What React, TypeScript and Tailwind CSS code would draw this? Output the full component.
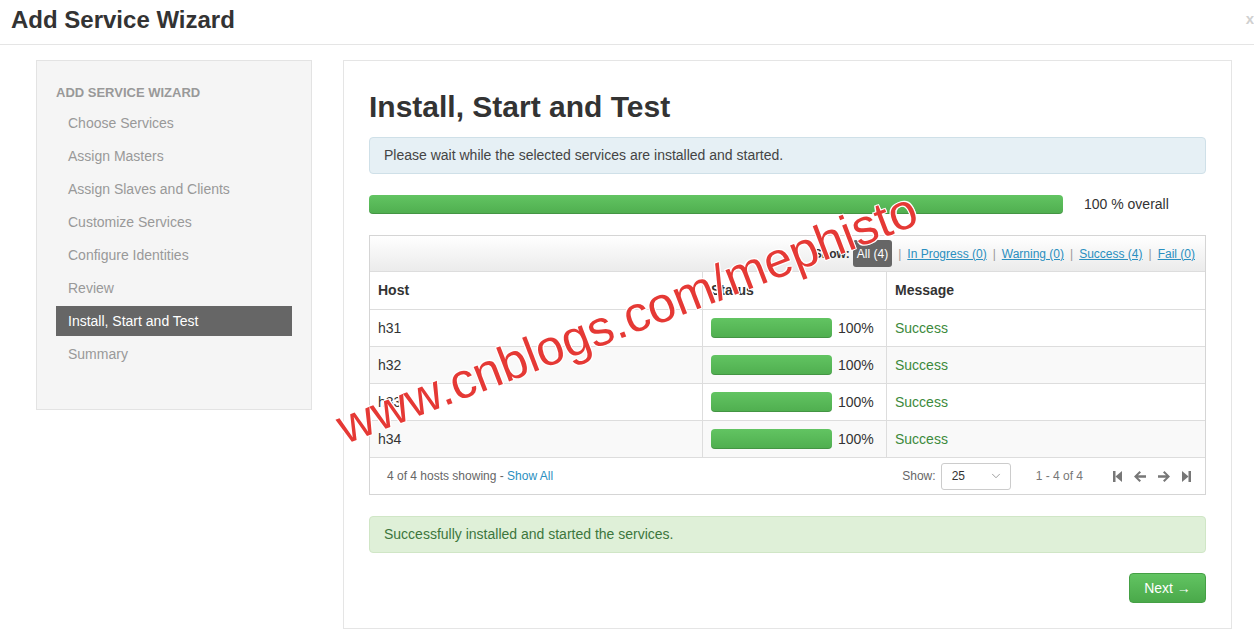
import React from 'react';
import { ChevronDown } from 'lucide-react';

const STEPS = [
  'Choose Services',
  'Assign Masters',
  'Assign Slaves and Clients',
  'Customize Services',
  'Configure Identities',
  'Review',
  'Install, Start and Test',
  'Summary',
];

const HOSTS = ['h31', 'h32', 'h33', 'h34'];

const FirstIcon = () => (
  <svg width="9" height="11" viewBox="0 0 9 11">
    <rect x="0" y="0" width="2.5" height="11" fill="#777" />
    <path d="M9 0 L2.5 5.5 L9 11 Z" fill="#777" />
  </svg>
);

const LastIcon = () => (
  <svg width="9" height="11" viewBox="0 0 9 11">
    <rect x="6.5" y="0" width="2.5" height="11" fill="#777" />
    <path d="M0 0 L6.5 5.5 L0 11 Z" fill="#777" />
  </svg>
);

const ArrowIcon = ({ dir }: { dir: 'left' | 'right' }) => (
  <svg width="12" height="11" viewBox="0 0 12 11" style={{ transform: dir === 'right' ? 'scaleX(-1)' : undefined }}>
    <path d="M0 5.5 L5.5 0 L7 1.5 L4 4.3 L12 4.3 L12 6.7 L4 6.7 L7 9.5 L5.5 11 Z" fill="#777" />
  </svg>
);

const Bar = ({ className }: { className: string }) => (
  <div className={`rounded-[4px] bg-gradient-to-b from-[#62c462] to-[#4fae4f] shadow-[inset_0_-1px_0_rgba(0,0,0,0.15)] ${className}`} />
);

export default function App() {
  return (
    <div className="relative w-full h-[633px] overflow-hidden bg-white text-[#333] font-['Liberation_Sans',Arial,sans-serif]">
      {/* Header */}
      <div className="h-[45px] border-b border-[#e5e5e5] flex items-start justify-between pl-[11px] pr-0">
        <h1 className="text-[24px] leading-[28px] font-bold text-[#333] mt-[6px]">Add Service Wizard</h1>
        <span className="text-[15px] font-bold text-[#d0d0d0] mt-[8px]">x</span>
      </div>

      <div className="flex pl-[36px] pt-[15px] gap-[31px]">
        {/* Sidebar */}
        <div className="w-[276px] h-[350px] bg-[#f5f5f5] border border-[#e3e3e3] pl-[19px] pt-[22px]">
          <div className="text-[13px] leading-[20px] font-bold uppercase text-[#999]">Add Service Wizard</div>
          <div className="mt-[5px] flex flex-col gap-[3px]">
            {STEPS.map(s => (
              <div
                key={s}
                className={`w-[236px] h-[30px] flex items-center pl-[12px] text-[14px] ${
                  s === 'Install, Start and Test' ? 'bg-[#666] text-white' : 'text-[#999]'
                }`}
              >
                {s}
              </div>
            ))}
          </div>
        </div>

        {/* Main panel */}
        <div className="w-[889px] h-[569px] border border-[#e5e5e5] pl-[25px] pr-[25px] pt-[28px]">
          <h2 className="text-[30px] leading-[36px] font-bold text-[#333]">Install, Start and Test</h2>

          <div className="mt-[12px] h-[37px] rounded-[4px] bg-[#e6f0f5] border border-[#cfe0e8] flex items-center pl-[14px] text-[14px] text-[#444]">
            Please wait while the selected services are installed and started.
          </div>

          <div className="mt-[20px] flex items-center">
            <Bar className="w-[694px] h-[19px]" />
            <span className="ml-[21px] text-[14px] text-[#333]">100 % overall</span>
          </div>

          {/* Table box */}
          <div className="mt-[20px] border border-[#d5d5d5] text-[14px]">
            <div className="h-[36px] bg-gradient-to-b from-white to-[#ebebeb] flex items-center justify-end pr-[10px] text-[12px] border-b border-[#ddd]">
              <span className="font-bold text-[#333] mr-[3px]">Show:</span>
              <span className="bg-[#666] text-white rounded-[3px] px-[4px] h-[27px] flex items-center">All (4)</span>
              <span className="text-[#999] mx-[6px]">|</span>
              <span className="text-[#2a8fc0] underline">In Progress (0)</span>
              <span className="text-[#999] mx-[6px]">|</span>
              <span className="text-[#2a8fc0] underline">Warning (0)</span>
              <span className="text-[#999] mx-[6px]">|</span>
              <span className="text-[#2a8fc0] underline">Success (4)</span>
              <span className="text-[#999] mx-[6px]">|</span>
              <span className="text-[#2a8fc0] underline">Fail (0)</span>
            </div>

            <div className="grid grid-cols-[333px_184px_1fr]">
              <div className="h-[37px] flex items-center pl-[8px] font-bold border-r border-[#ddd]">Host</div>
              <div className="h-[37px] flex items-center pl-[8px] font-bold border-r border-[#ddd]">Status</div>
              <div className="h-[37px] flex items-center pl-[8px] font-bold">Message</div>
              {HOSTS.map((h, i) => (
                <React.Fragment key={h}>
                  <div className={`h-[37px] flex items-center pl-[8px] border-t border-r border-[#ddd] ${i % 2 ? 'bg-[#f9f9f9]' : ''}`}>{h}</div>
                  <div className={`h-[37px] flex items-center pl-[8px] border-t border-r border-[#ddd] ${i % 2 ? 'bg-[#f9f9f9]' : ''}`}>
                    <Bar className="w-[121px] h-[20px]" />
                    <span className="ml-[6px]">100%</span>
                  </div>
                  <div className={`h-[37px] flex items-center pl-[8px] border-t border-[#ddd] text-[#3c8a3c] ${i % 2 ? 'bg-[#f9f9f9]' : ''}`}>Success</div>
                </React.Fragment>
              ))}
            </div>

            <div className="h-[37px] border-t border-[#ddd] flex items-center pl-[17px] pr-[14px] text-[12px] text-[#666]">
              <span>
                4 of 4 hosts showing - <span className="text-[#2a8fc0]">Show All</span>
              </span>
              <span className="ml-auto">Show:</span>
              <div className="ml-[5px] w-[70px] h-[27px] border border-[#ccc] rounded-[3px] bg-white flex items-center justify-between pl-[10px] pr-[7px] text-[#333]">
                <span>25</span>
                <ChevronDown size={14} strokeWidth={1.2} color="#777" />
              </div>
              <span className="ml-[25px] text-[#777]">1 - 4 of 4</span>
              <div className="ml-[30px] flex items-center gap-[12px]">
                <FirstIcon />
                <ArrowIcon dir="left" />
                <ArrowIcon dir="right" />
                <LastIcon />
              </div>
            </div>
          </div>

          <div className="mt-[21px] h-[37px] rounded-[4px] bg-[#dff0d8] border border-[#d0e6c6] flex items-center pl-[14px] text-[14px] text-[#3c763d]">
            Successfully installed and started the services.
          </div>

          <div className="mt-[20px] flex justify-end">
            <button className="w-[77px] h-[30px] rounded-[4px] bg-gradient-to-b from-[#62c462] to-[#4aa94a] border border-[#45a045] text-white text-[14px]">
              Next →
            </button>
          </div>
        </div>
      </div>

      {/* Watermark */}
      <div
        className="absolute left-[627px] top-[318px] -translate-x-1/2 -translate-y-1/2 -rotate-[21deg] whitespace-nowrap text-[50px] leading-none text-[#e53935] pointer-events-none"
        style={{ textShadow: '1px 1px 0 #fff, -1px -1px 0 #fff, 1px -1px 0 #fff, -1px 1px 0 #fff' }}
      >
        www.cnblogs.com/mephisto
      </div>
    </div>
  );
}
